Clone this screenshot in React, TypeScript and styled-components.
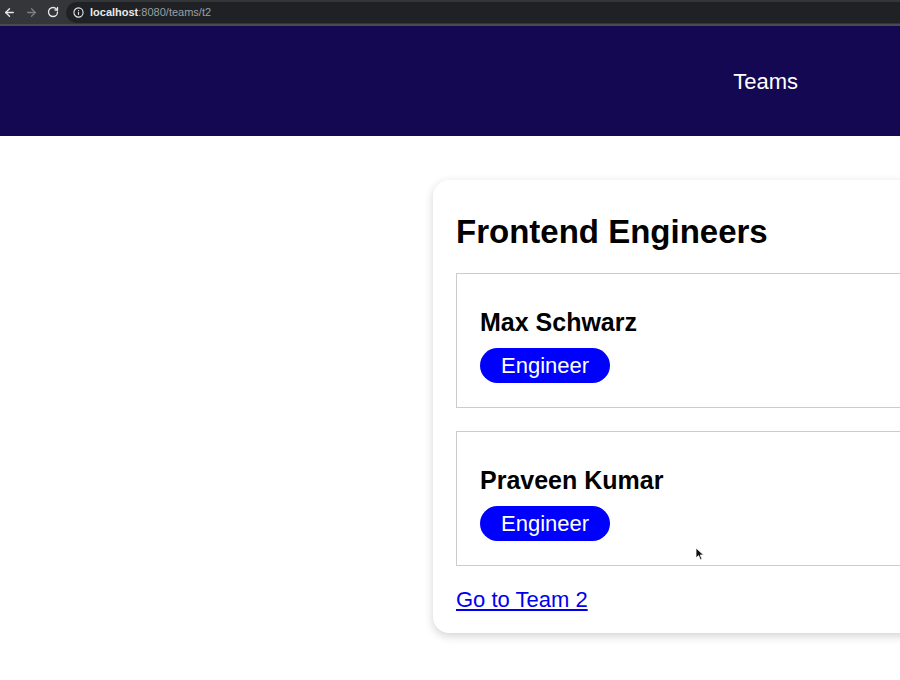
import styled, { createGlobalStyle } from "styled-components"
import { ArrowLeft, ArrowRight, RotateCw, Info } from "lucide-react"

const members = [
  { name: "Max Schwarz", role: "Engineer" },
  { name: "Praveen Kumar", role: "Engineer" },
]

const App = () => {
  return (
    <>
      <GlobalStyle />
      <Page>
        <BrowserBar>
          <NavIcon $dim={false}>
            <ArrowLeft size={13} strokeWidth={2.4} />
          </NavIcon>
          <NavIcon $dim={true}>
            <ArrowRight size={13} strokeWidth={2.4} />
          </NavIcon>
          <NavIcon $dim={false}>
            <RotateCw size={12} strokeWidth={2.6} />
          </NavIcon>
          <UrlPill>
            <Info size={11} strokeWidth={2.4} color="#e8eaed" />
            <Url>
              <b>localhost</b>
              <span>:8080/teams/t2</span>
            </Url>
          </UrlPill>
        </BrowserBar>
        <Header>
          <NavLink>Teams</NavLink>
        </Header>
        <Main>
          <Card>
            <Title>Frontend Engineers</Title>
            <List>
              {members.map((m) => (
                <Member key={m.name}>
                  <Name>{m.name}</Name>
                  <Badge>{m.role}</Badge>
                </Member>
              ))}
            </List>
            <TeamLink href="#">Go to Team 2</TeamLink>
          </Card>
        </Main>
        <Cursor width="10" height="14" viewBox="0 0 10 14">
          <path d="M1 1 L1 11 L3.5 8.6 L5.4 12.8 L7 12.1 L5.2 8 L8.6 8 Z" fill="#111" stroke="#fff" strokeWidth="0.8" />
        </Cursor>
      </Page>
    </>
  )
}

export default App

const GlobalStyle = createGlobalStyle`
body{
  margin: 0;
  background: #fff;
  font-family: "Liberation Sans", Arial, Helvetica, sans-serif;
  overflow: hidden;
}
`

const Page = styled.div`
width: 900px;
height: 680px;
position: relative;
overflow: hidden;
`

const BrowserBar = styled.div`
height: 26px;
background-color: #35363a;
display: flex;
align-items: center;
box-sizing: border-box;
border-bottom: 2px solid #4a4b50;
`

const NavIcon = styled.div<{ $dim: boolean }>`
width: 22px;
height: 22px;
box-sizing: border-box;
padding-right: 4px;
display: flex;
align-items: center;
justify-content: center;
color: ${(p) => (p.$dim ? "#7c7f85" : "#e8eaed")};
`

const UrlPill = styled.div`
flex: 1;
height: 21px;
background-color: #202124;
border-radius: 11px 0 0 11px;
display: flex;
align-items: center;
gap: 6px;
padding-left: 7px;
`

const Url = styled.div`
font-size: 11px;
color: #9aa0a6;

b{
  color: #e8eaed;
  font-weight: 700;
}
`

const Header = styled.header`
height: 110px;
background-color: #140852;
display: flex;
align-items: center;
justify-content: flex-end;
padding-right: 102px;
`

const NavLink = styled.a`
color: #fff;
font-size: 22px;
margin-top: 2px;
`

const Main = styled.main`
display: flex;
padding: 44px 0 0 433px;
`

const Card = styled.div`
flex-shrink: 0;
width: 560px;
background: #fff;
border-radius: 16px;
box-shadow: 0 3px 10px rgba(0, 0, 0, 0.18);
padding: 23px 23px 20px;
box-sizing: border-box;
`

const Title = styled.h2`
font-size: 33px;
font-weight: 700;
margin: 10px 0 22px;
color: #000;
`

const List = styled.div`
display: flex;
flex-direction: column;
gap: 23px;
`

const Member = styled.div`
border: 1px solid #ccc;
padding: 34px 23px 24px;
`

const Name = styled.h3`
font-size: 25px;
font-weight: 700;
margin: 0 0 11px;
color: #000;
`

const Badge = styled.span`
display: inline-block;
background-color: #0000ff;
color: #fff;
font-size: 22px;
line-height: 25px;
padding: 5px 21px;
border-radius: 20px;
`

const TeamLink = styled.a`
display: inline-block;
margin-top: 21px;
font-size: 22px;
color: #0000ee;
text-decoration: underline;
`

const Cursor = styled.svg`
position: absolute;
left: 695px;
top: 547px;
`
